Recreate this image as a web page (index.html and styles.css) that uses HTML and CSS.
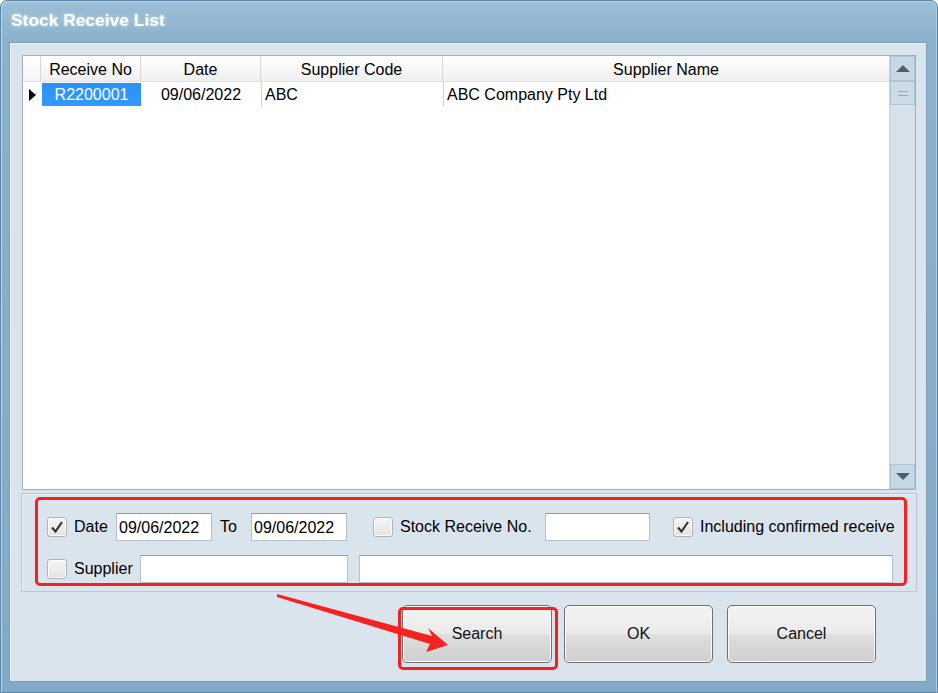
FILE: index.html
```html
<!DOCTYPE html>
<html>
<head>
<meta charset="utf-8">
<title>Stock Receive List</title>
<link rel="stylesheet" href="styles.css">
</head>
<body>
<div class="window">
  <div class="titlebar"><span class="title">Stock Receive List</span></div>
  <div class="client">
    <div class="grid">
      <div class="grid-main">
        <div class="row head">
          <div class="cell rh"></div>
          <div class="cell c">Receive No</div>
          <div class="cell c">Date</div>
          <div class="cell c">Supplier Code</div>
          <div class="cell c">Supplier Name</div>
        </div>
        <div class="row data">
          <div class="cell rh"><span class="ptr"></span></div>
          <div class="cell c sel">R2200001</div>
          <div class="cell c">09/06/2022</div>
          <div class="cell l">ABC</div>
          <div class="cell l">ABC Company Pty Ltd</div>
        </div>
      </div>
      <div class="vscroll">
        <div class="sbtn"><span class="arrow-up"></span></div>
        <div class="thumb"><span class="grip"></span></div>
        <div class="track"></div>
        <div class="sbtn"><span class="arrow-down"></span></div>
      </div>
    </div>

    <div class="filter">
      <div class="frow">
        <span class="cb checked"><svg viewBox="0 0 20 20" width="20" height="20"><path d="M5 10.5 L8.5 14.5 L15 5" fill="none" stroke="#333" stroke-width="2.2"/></svg></span>
        <span class="lbl w-date">Date</span>
        <span class="input w96">09/06/2022</span>
        <span class="lbl w-to">To</span>
        <span class="input w96">09/06/2022</span>
        <span class="cb ml26"></span>
        <span class="lbl w-srn">Stock Receive No.</span>
        <span class="input w105"></span>
        <span class="cb checked ml23"><svg viewBox="0 0 20 20" width="20" height="20"><path d="M5 10.5 L8.5 14.5 L15 5" fill="none" stroke="#333" stroke-width="2.2"/></svg></span>
        <span class="lbl">Including confirmed receive</span>
      </div>
      <div class="frow">
        <span class="cb"></span>
        <span class="lbl w-sup">Supplier</span>
        <span class="input w208"></span>
        <span class="input w534 ml11"></span>
      </div>
    </div>

    <div class="buttons">
      <button class="btn b-search">Search</button>
      <button class="btn b-ok">OK</button>
      <button class="btn b-cancel">Cancel</button>
    </div>
  </div>

  <div class="mark mark-filter"></div>
  <div class="mark mark-search"></div>
  <svg class="arrow" width="938" height="693" viewBox="0 0 938 693">
    <polygon points="277,594 432,636 428,628 448,645 426,652 430,644 277,597" fill="#f52222"/>
  </svg>
</div>
</body>
</html>
```

FILE: styles.css
```css
* { box-sizing: border-box; }
html, body { margin: 0; padding: 0; background: #ffffff; }
body {
  width: 938px; height: 693px; overflow: hidden;
  font-family: "Liberation Sans", Arial, sans-serif;
  font-size: 16px; color: #000;
}
.window {
  position: relative;
  width: 938px; height: 693px;
  display: flex; flex-direction: column;
  background: linear-gradient(180deg, #9dbfd7 0%, #8bb1cd 40px, #82aac8 100%);
  border: 1px solid #5d87ab;
  border-radius: 7px 7px 0 0;
  box-shadow: inset 1px 1px 0 #b9d2e4, inset -1px 0 0 #b0cadf;
}
.titlebar {
  height: 41px;
  display: flex; align-items: center;
  padding: 0 0 1px 10px;
}
.title {
  color: #fff;
  font-weight: bold;
  font-size: 17px;
  text-shadow: 0 0 4px rgba(255,255,255,0.5);
  letter-spacing: 0.2px;
}
.client {
  margin: 0 10px 10px 8px;
  flex: 1;
  background: #dae4ed;
  border: 1px solid #7c9fbc;
  box-shadow: inset 1px 1px 0 #eef3f7;
  display: flex; flex-direction: column;
  padding: 12px 0 0 0;
}
/* Data grid */
.grid {
  margin-left: 12px;
  width: 894px; height: 435px;
  border: 1px solid #a2adb7;
  background: #fff;
  display: flex;
}
.grid-main { flex: 1; }
.row { display: grid; grid-template-columns: 18px 100px 120px 182px 1fr; }
.row.head {
  height: 26px;
  background: linear-gradient(180deg, #ffffff 0%, #f7f7f7 55%, #efefef 100%);
  border-bottom: 1px solid #e2e2e2;
}
.row.head .cell { border-right: 1px solid #d6d6d6; padding-top: 2px; }
.row.head .cell:last-child { border-right: none; }
.row.data { height: 25px; }
.cell {
  display: flex; align-items: center;
  white-space: nowrap; overflow: hidden;
}
.cell.c { justify-content: center; }
.cell.l { padding-left: 3px; }
.row.data .cell.l { border-left: 1px solid #bcd6ee; }
.cell.rh { background: #fff; justify-content: center; }
.row.head .cell.rh { background: linear-gradient(180deg, #ffffff 0%, #f4f4f4 100%); }
.ptr {
  width: 0; height: 0;
  border-top: 6px solid transparent;
  border-bottom: 6px solid transparent;
  border-left: 7px solid #000;
  margin-left: 1px;
}
.cell.sel {
  background: linear-gradient(180deg, #2a92f6 0%, #3399ff 100%);
  color: #fff;
  margin: 1px 0 1px 1px;
}
/* Scrollbar */
.vscroll {
  width: 26px;
  display: flex; flex-direction: column;
  background: #d6e1ea;
  border-left: 1px solid #c5d3df;
}
.sbtn {
  height: 25px;
  background: #c7d7e4;
  border: 1px solid #aec3d4;
  display: flex; align-items: center; justify-content: center;
}
.arrow-up {
  width: 0; height: 0;
  border-left: 7px solid transparent; border-right: 7px solid transparent;
  border-bottom: 7px solid #4e5d6a;
}
.arrow-down {
  width: 0; height: 0;
  border-left: 7px solid transparent; border-right: 7px solid transparent;
  border-top: 7px solid #4e5d6a;
}
.thumb {
  height: 24px;
  background: #cddbe7;
  border: 1px solid #aec3d4;
  display: flex; align-items: center; justify-content: center;
}
.grip {
  width: 10px; height: 5px;
  border-top: 1px solid #95abbe;
  border-bottom: 1px solid #95abbe;
}
.track { flex: 1; }
/* Filter panel */
.filter {
  margin: 3px 0 0 11px;
  width: 896px; height: 99px;
  border: 1px solid #b3c7d8;
  box-shadow: inset 1px 1px 0 #eef3f7;
  padding: 19px 0 0 25px;
  display: flex; flex-direction: column; gap: 14px;
}
.frow { display: flex; align-items: center; height: 28px; }
.cb {
  width: 20px; height: 20px; flex: none;
  border: 1px solid #b4b4b4;
  border-radius: 3px;
  background: linear-gradient(180deg, #f5f5f5 0%, #e3e3e3 100%);
  box-shadow: inset 0 0 0 1px #fbfbfb;
  display: inline-flex;
}
.cb svg { margin: -1px; }
.lbl { margin-left: 7px; white-space: nowrap; }
.w-date { width: 35px; margin-right: 7px; }
.w-to { width: 31px; margin-left: 8px; }
.w-srn { width: 145px; }
.w-sup { width: 66px; }
.input {
  height: 28px; flex: none;
  background: #fff;
  border: 1px solid #b5c0ca;
  border-top-color: #8e9aa6;
  padding: 2px 0 0 2px;
  display: inline-flex; align-items: center;
  font-size: 16px;
}
.w96 { width: 96px; }
.w105 { width: 105px; }
.w208 { width: 208px; }
.w534 { width: 534px; }
.ml26 { margin-left: 26px; }
.ml23 { margin-left: 23px; }
.ml11 { margin-left: 11px; }
/* Buttons */
.buttons {
  display: flex;
  margin-top: 13px;
  padding-left: 392px;
}
.btn {
  height: 58px; width: 149px;
  font-family: "Liberation Sans", Arial, sans-serif;
  font-size: 16px; color: #111;
  border: 1px solid #707070;
  border-radius: 5px;
  background: linear-gradient(180deg, #f3f3f3 0%, #ebebeb 48%, #dedede 52%, #cfcfcf 100%);
  box-shadow: inset 0 0 0 1px #fbfbfb;
  padding: 0;
}
.b-search { width: 150px; }
.b-ok { margin-left: 12px; }
.b-cancel { margin-left: 14px; }
/* Annotations */
.mark {
  position: absolute;
  border: 3px solid #f5201f;
  border-radius: 5px;
  pointer-events: none;
}
.mark-filter { left: 34px; top: 496px; width: 872px; height: 89px; }
.mark-search { left: 397px; top: 606px; width: 160px; height: 63px; }
.arrow { position: absolute; left: -1px; top: -1px; pointer-events: none; }
```
